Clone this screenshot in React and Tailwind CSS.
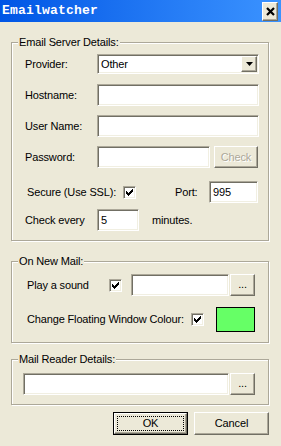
import React from "react";

const sunken =
  "bg-white border border-t-[#aca899] border-l-[#aca899] border-r-white border-b-white shadow-[inset_1px_1px_0_#716f64,inset_-1px_-1px_0_#f1efe2]";
const raised =
  "bg-[#ece9d8] border border-t-white border-l-white border-r-[#716f64] border-b-[#716f64] shadow-[inset_-1px_-1px_0_#aca899]";

function Group({ title, className, children }) {
  return (
    <div
      className={`relative border border-[#aca899] shadow-[inset_1px_1px_0_#fff,1px_1px_0_#fff] ${className}`}
    >
      <span className="absolute left-[6px] top-[-8px] bg-[#ece9d8] px-[1px] leading-[14px]">
        {title}
      </span>
      {children}
    </div>
  );
}

function CheckBox() {
  return (
    <div className={`w-[13px] h-[13px] flex items-center justify-center ${sunken}`}>
      <svg width="7" height="7" viewBox="0 0 7 7" shapeRendering="crispEdges">
        <path
          d="M6 0h1v3h-1v1h-1v1h-1v1h-1v1h-1v-1h-1v-1h-1v-3h1v1h1v1h1v-1h1v-1h1z"
          fill="#000"
        />
      </svg>
    </div>
  );
}

function Field({ value, className }) {
  return (
    <div className={`h-[22px] flex items-center pl-[3px] ${sunken} ${className}`}>
      {value}
    </div>
  );
}

function DotsButton() {
  return (
    <button className={`w-[25px] h-[22px] ml-[1px] flex items-center justify-center pb-[2px] ${raised}`}>
      ...
    </button>
  );
}

export default function App() {
  return (
    <div className="w-[281px] h-[446px] bg-[#ece9d8] flex flex-col text-[11px] tracking-[-0.15px] text-black font-['Liberation_Sans',Arial,sans-serif] overflow-hidden">
      {/* title bar */}
      <div className="h-[22px] flex items-center justify-between pl-[2px] pr-[3px] bg-gradient-to-r from-[#0055e5] to-[#3b93ff]">
        <span className="text-white font-bold text-[13px] font-['Liberation_Mono',monospace] tracking-[0.2px]">
          Emailwatcher
        </span>
        <div className={`w-[16px] h-[19px] flex items-center justify-center ${raised}`}>
          <svg width="9" height="9" viewBox="0 0 9 9">
            <path d="M1 1L8 8M8 1L1 8" stroke="#000" strokeWidth="2.2" />
          </svg>
        </div>
      </div>

      <div className="flex flex-col pl-[11px] pr-[12px]">
        <Group title="Email Server Details:" className="mt-[20px] h-[199px] pl-[13px]">
          <div className="flex items-center mt-[11px] h-[20px]">
            <span className="w-[72px]">Provider:</span>
            <div className={`w-[162px] h-[20px] flex items-center justify-between pl-[3px] pr-[1px] ${sunken}`}>
              <span>Other</span>
              <div className={`w-[16px] h-[16px] flex items-center justify-center ${raised}`}>
                <svg width="7" height="4" viewBox="0 0 7 4">
                  <path d="M0 0h7l-3.5 4z" fill="#000" />
                </svg>
              </div>
            </div>
          </div>
          <div className="flex items-center mt-[10px] h-[22px]">
            <span className="w-[72px]">Hostname:</span>
            <Field className="w-[162px]" />
          </div>
          <div className="flex items-center mt-[9px] h-[22px]">
            <span className="w-[72px]">User Name:</span>
            <Field className="w-[162px]" />
          </div>
          <div className="flex items-center mt-[9px] h-[22px]">
            <span className="w-[72px]">Password:</span>
            <Field className="w-[113px]" />
            <button
              className={`ml-[4px] w-[44px] h-[22px] flex items-center justify-center text-[#aca899] [text-shadow:1px_1px_0_#fff] ${raised}`}
            >
              Check
            </button>
          </div>
          <div className="flex items-center mt-[13px] h-[22px]">
            <span className="w-[96px] ml-[2px]">Secure (Use SSL):</span>
            <CheckBox />
            <span className="ml-[39px] w-[34px]">Port:</span>
            <Field value="995" className="w-[49px]" />
          </div>
          <div className="flex items-center mt-[6px] h-[22px]">
            <span className="w-[72px]">Check every</span>
            <Field value="5" className="w-[42px]" />
            <span className="ml-[13px]">minutes.</span>
          </div>
        </Group>

        <Group title="On New Mail:" className="mt-[20px] h-[82px] pl-[15px]">
          <div className="flex items-center mt-[12px] h-[22px]">
            <span className="w-[82px]">Play a sound</span>
            <CheckBox />
            <Field className="ml-[9px] w-[98px]" />
            <DotsButton />
          </div>
          <div className="flex items-center mt-[11px] h-[25px]">
            <span className="w-[164px]">Change Floating Window Colour:</span>
            <CheckBox />
            <div className="ml-[12px] w-[39px] h-[25px] bg-[#66ff66] border border-black" />
          </div>
        </Group>

        <Group title="Mail Reader Details:" className="mt-[16px] h-[46px] pl-[11px]">
          <div className="flex items-center mt-[13px]">
            <Field className="w-[206px]" />
            <DotsButton />
          </div>
        </Group>

        <div className="flex justify-end gap-[6px] mt-[7px]">
          <button className="w-[75px] h-[23px] border border-black">
            <div className={`h-full p-[2px] ${raised}`}>
              <div className="h-full border border-dotted border-black flex items-center justify-center">
                OK
              </div>
            </div>
          </button>
          <button className={`w-[75px] h-[23px] flex items-center justify-center ${raised}`}>
            Cancel
          </button>
        </div>
      </div>
    </div>
  );
}
